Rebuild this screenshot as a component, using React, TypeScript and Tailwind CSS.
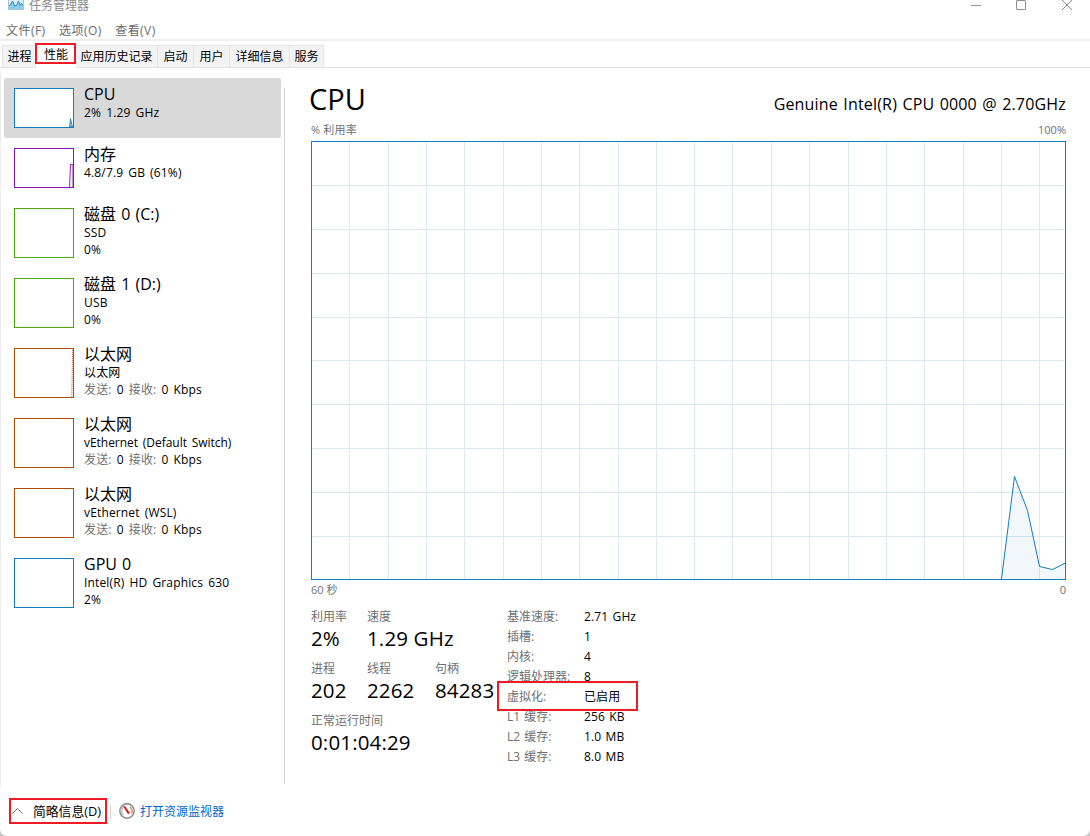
import type { ReactNode } from 'react';

interface Device {
  name: string;
  lines: ReactNode[];
  border: string;
  selected?: boolean;
  spark?: ReactNode;
}

const GRID_COLUMNS = [38, 77, 115, 153, 192, 230, 268, 307, 345, 383, 421, 460, 498, 537, 575, 613, 652, 690, 728];
const GRID_ROWS = [44, 88, 132, 176, 219, 263, 307, 351, 395];

function Traffic() {
  return (
    <>
      <span className="text-[#707070]">发送:</span> 0{' '}
      <span className="text-[#707070]">接收:</span> 0 Kbps
    </>
  );
}

const DEVICES: Device[] = [
  {
    name: 'CPU',
    lines: ['2% 1.29 GHz'],
    border: 'border-[#117dbb]',
    selected: true,
    spark: <path d="M55.5 39 L56.5 30.5 L58.5 39 Z" fill="#8fbfdc" stroke="#117dbb" strokeWidth="0.8" />,
  },
  {
    name: '内存',
    lines: ['4.8/7.9 GB (61%)'],
    border: 'border-[#8b12ae]',
    spark: <path d="M55.5 39 L56.5 16.5 L59 16.5 L59 39" fill="#f4f2f4" stroke="#8b12ae" strokeWidth="0.9" />,
  },
  { name: '磁盘 0 (C:)', lines: ['SSD', '0%'], border: 'border-[#4da60c]' },
  { name: '磁盘 1 (D:)', lines: ['USB', '0%'], border: 'border-[#4da60c]' },
  {
    name: '以太网',
    lines: ['以太网', <Traffic />],
    border: 'border-[#a74f01]',
    spark: <path d="M57.8 49 L58.6 1" fill="none" stroke="#e0703c" strokeWidth="1" strokeDasharray="1.2 0.8" />,
  },
  {
    name: '以太网',
    lines: [<span className="tracking-[-0.04px]">vEthernet (Default Switch)</span>, <Traffic />],
    border: 'border-[#a74f01]',
  },
  { name: '以太网', lines: ['vEthernet (WSL)', <Traffic />], border: 'border-[#a74f01]' },
  { name: 'GPU 0', lines: ['Intel(R) HD Graphics 630', '2%'], border: 'border-[#117dbb]' },
];

const DETAILS = [
  { label: '基准速度:', value: '2.71 GHz' },
  { label: '插槽:', value: '1' },
  { label: '内核:', value: '4' },
  { label: '逻辑处理器:', value: '8' },
  { label: '虚拟化:', value: '已启用', marked: true },
  { label: 'L1 缓存:', value: '256 KB' },
  { label: 'L2 缓存:', value: '1.0 MB' },
  { label: 'L3 缓存:', value: '8.0 MB' },
];

const TABS = [
  { label: '进程', width: 'w-[34px]' },
  { label: '性能', width: 'w-[40px]', active: true },
  { label: '应用历史记录', width: 'w-[82px]' },
  { label: '启动', width: 'w-[36px]' },
  { label: '用户', width: 'w-[36px]' },
  { label: '详细信息', width: 'w-[60px]' },
  { label: '服务', width: 'w-[34px]' },
];

function TitleBar() {
  return (
    <header className="flex h-5 items-start justify-between">
      <div className="flex h-3 items-center pl-2">
        <svg className="h-4 w-4 -translate-y-[3px]" viewBox="0 0 16 16">
          <rect x="0.5" y="0.5" width="15" height="14" fill="#dceefa" stroke="#a9c4d4" />
          <path d="M1 10 L3 8 L5 6 L7 11 L9 10 L11 6 L12 10 L14 8 L15 11 L15 14 L1 14 Z" fill="#8fcbed" />
          <path d="M1 10.5 L2.5 10 L4.5 6 L6.5 11 L8.5 10.5 L10.5 6 L12 10.5 L13.5 8.5 L15 10.5" fill="none" stroke="#2d8fc7" />
        </svg>
        <span className="ml-[5px] text-[12px] leading-3 text-[#8b8b8b]">任务管理器</span>
      </div>
      <svg className="mr-[17px] h-[11px] w-[103px]" viewBox="0 0 103 11" fill="none" stroke="#8c8c8c">
        <path d="M1 5.5 H11" />
        <rect x="46.5" y="0.5" width="9" height="9" rx="0.5" />
        <path d="M92 0 L102 10 M102 0 L92 10" />
      </svg>
    </header>
  );
}

function TabStrip() {
  return (
    <nav className="flex h-[27px] items-end border-b border-[#e5e5e5] pl-0.5">
      {TABS.map(tab => (
        <div
          key={tab.label}
          className={`relative flex shrink-0 items-center justify-center text-[12px] ${tab.width} ${
            tab.active
              ? '-mb-px h-6 bg-white pb-[3px]'
              : 'h-[22px] border-t border-r border-[#e5e5e5] bg-[#f3f3f3] first:border-l first:pl-px'
          }`}
        >
          {tab.label}
          {tab.active && <div className="absolute -top-px -left-px h-[21px] w-[41px] border-2 border-[#ed1c24]" />}
        </div>
      ))}
    </nav>
  );
}

function DeviceRow({ device }: { device: Device }) {
  const tall = device.lines.length > 1;
  return (
    <div className={`flex rounded-[2px] pl-[10px] ${tall ? 'h-[70px]' : 'h-[60px]'} ${device.selected ? 'bg-[#d9d9d9]' : ''}`}>
      <div className={`mt-[10px] w-[60px] shrink-0 border bg-white ${tall ? 'h-[50px]' : 'h-10'} ${device.border}`}>
        {device.spark && (
          <svg className="block h-full w-full" viewBox={tall ? '1 1 58 48' : '1 1 58 38'}>
            {device.spark}
          </svg>
        )}
      </div>
      <div className="ml-[10px] pt-1.5 whitespace-nowrap">
        <div className="text-[16px] leading-5 [word-spacing:1px]">{device.name}</div>
        {device.lines.map((line, i) => (
          <div key={i} className="text-[12px] leading-[17px] tracking-[0.15px] [word-spacing:1.8px]">{line}</div>
        ))}
      </div>
    </div>
  );
}

function UsageChart() {
  return (
    <svg className="block h-[439px] w-[755px]" viewBox="0 0 755 439" fill="none">
      <g stroke="#d9eaf4" shapeRendering="crispEdges">
        {GRID_COLUMNS.map(x => <path key={x} d={`M${x + 0.5} 1 V438`} />)}
        {GRID_ROWS.map(y => <path key={y} d={`M1 ${y + 0.5} H753`} />)}
      </g>
      <path d="M690.5 438 L703.5 335.5 L716.5 369.5 L728.5 425.5 L741.5 428.5 L754.5 422 V438 Z" fill="#117dbb" fillOpacity="0.06" />
      <path d="M690.5 438 L703.5 335.5 L716.5 369.5 L728.5 425.5 L741.5 428.5 L754.5 422" stroke="#117dbb" />
      <rect x="0.5" y="0.5" width="754" height="438" stroke="#117dbb" />
    </svg>
  );
}

function Stat({ label, value, className = '' }: { label: string; value: string; className?: string }) {
  return (
    <div className={`whitespace-nowrap ${className}`}>
      <div className="h-[17px] text-[12px] leading-[18px] text-[#707070]">{label}</div>
      <div className="h-[35px] text-[20.5px] leading-[26px] tracking-[0.15px]">{value}</div>
    </div>
  );
}

export default function App() {
  return (
    <div className="w-[1090px] bg-[#c4c4c4]">
      <div className="flex h-[836px] flex-col overflow-hidden rounded-b-[7px] bg-white font-['Open_Sans','Noto_Sans_CJK_SC',sans-serif] text-black">
        <TitleBar />
        <div className="flex h-[21px] items-center gap-[13.5px] border-b-2 border-[#f0f0f0] pt-[2px] pl-1.5 text-[12px] tracking-[0.45px] text-[#6b6b6b]">
          <span>文件(F)</span>
          <span>选项(O)</span>
          <span>查看(V)</span>
        </div>
        <TabStrip />

        <main className="flex h-[719px] pt-[3px]">
          <aside className="w-[284px] border-l border-[#ececec] pt-[7px] pl-[3px]">
            <div className="w-[277px]">
              {DEVICES.map((device, i) => <DeviceRow key={i} device={device} />)}
            </div>
          </aside>
          <div className="mt-[17px] h-[696px] w-px bg-[#d4d4d4]" />

          <section className="ml-[26px] w-[755px] pt-[7px]">
            <div className="flex h-[43px] items-center justify-between">
              <h1 className="-ml-[2px] pb-[2px] text-[29px] leading-10">CPU</h1>
              <span className="pt-[9px] text-[16px] leading-5 tracking-[0.18px] [word-spacing:1px]">
                Genuine Intel(R) CPU 0000 @ 2.70GHz
              </span>
            </div>
            <div className="flex h-5 items-start justify-between text-[11px] leading-[18px] text-[#707070]">
              <span className="tracking-[0.2px]">% 利用率</span>
              <span>100%</span>
            </div>
            <UsageChart />
            <div className="flex h-[21px] items-center justify-between text-[11px] text-[#707070]">
              <span>60 秒</span>
              <span>0</span>
            </div>

            <div className="flex pt-1.5">
              <div className="w-[196px] pt-px">
                <div className="flex">
                  <Stat className="w-14" label="利用率" value="2%" />
                  <Stat label="速度" value="1.29 GHz" />
                </div>
                <div className="flex">
                  <Stat className="w-14" label="进程" value="202" />
                  <Stat className="w-[68px]" label="线程" value="2262" />
                  <Stat label="句柄" value="84283" />
                </div>
                <Stat label="正常运行时间" value="0:01:04:29" />
              </div>
              <div className="text-[12px]">
                {DETAILS.map(row => (
                  <div key={row.label} className="relative flex h-5 items-center whitespace-nowrap">
                    <span className="w-[77px] text-[#707070] [word-spacing:1px]">{row.label}</span>
                    <span className="tracking-[0.1px] [word-spacing:1.2px]">{row.value}</span>
                    {row.marked && <div className="absolute -top-[6px] -left-[10px] h-[30px] w-[141px] border-2 border-[#ed1c24]" />}
                  </div>
                ))}
              </div>
            </div>
          </section>
        </main>

        <footer className="flex h-[49px] items-center pl-[9px] text-[12px]">
          <div className="-mt-[1px] flex h-[26px] w-[98px] items-center border-2 border-[#ed1c24] pl-px">
            <svg className="h-2 w-[11px]" viewBox="0 0 11 8" fill="none" stroke="#777777">
              <path d="M0.5 6.5 L5.5 1.5 L10.5 6.5" />
            </svg>
            <span className="ml-[10px] pt-px text-[12.8px] whitespace-nowrap">简略信息(D)</span>
          </div>
          <div className="ml-[3px] h-[14px] w-px bg-[#d0d0d0]" />
          <svg className="-mt-px ml-2 h-4 w-4" viewBox="0 0 16 16">
            <circle cx="8" cy="8" r="7.2" fill="#ffffff" stroke="#858585" strokeWidth="1.4" />
            <path d="M4.5 12 A5.2 5.2 0 0 1 4.5 4" fill="none" stroke="#b9b6ae" strokeWidth="1.2" />
            <path d="M11 4 A5.2 5.2 0 0 1 12.5 10.5" fill="none" stroke="#d98a6a" strokeWidth="1.4" />
            <path d="M4 3 L6.2 3.3 L10.8 10 L9 11.2 Z" fill="#d11a1a" />
          </svg>
          <span className="ml-[5px] text-[#0066cc]">打开资源监视器</span>
        </footer>
      </div>
    </div>
  );
}
